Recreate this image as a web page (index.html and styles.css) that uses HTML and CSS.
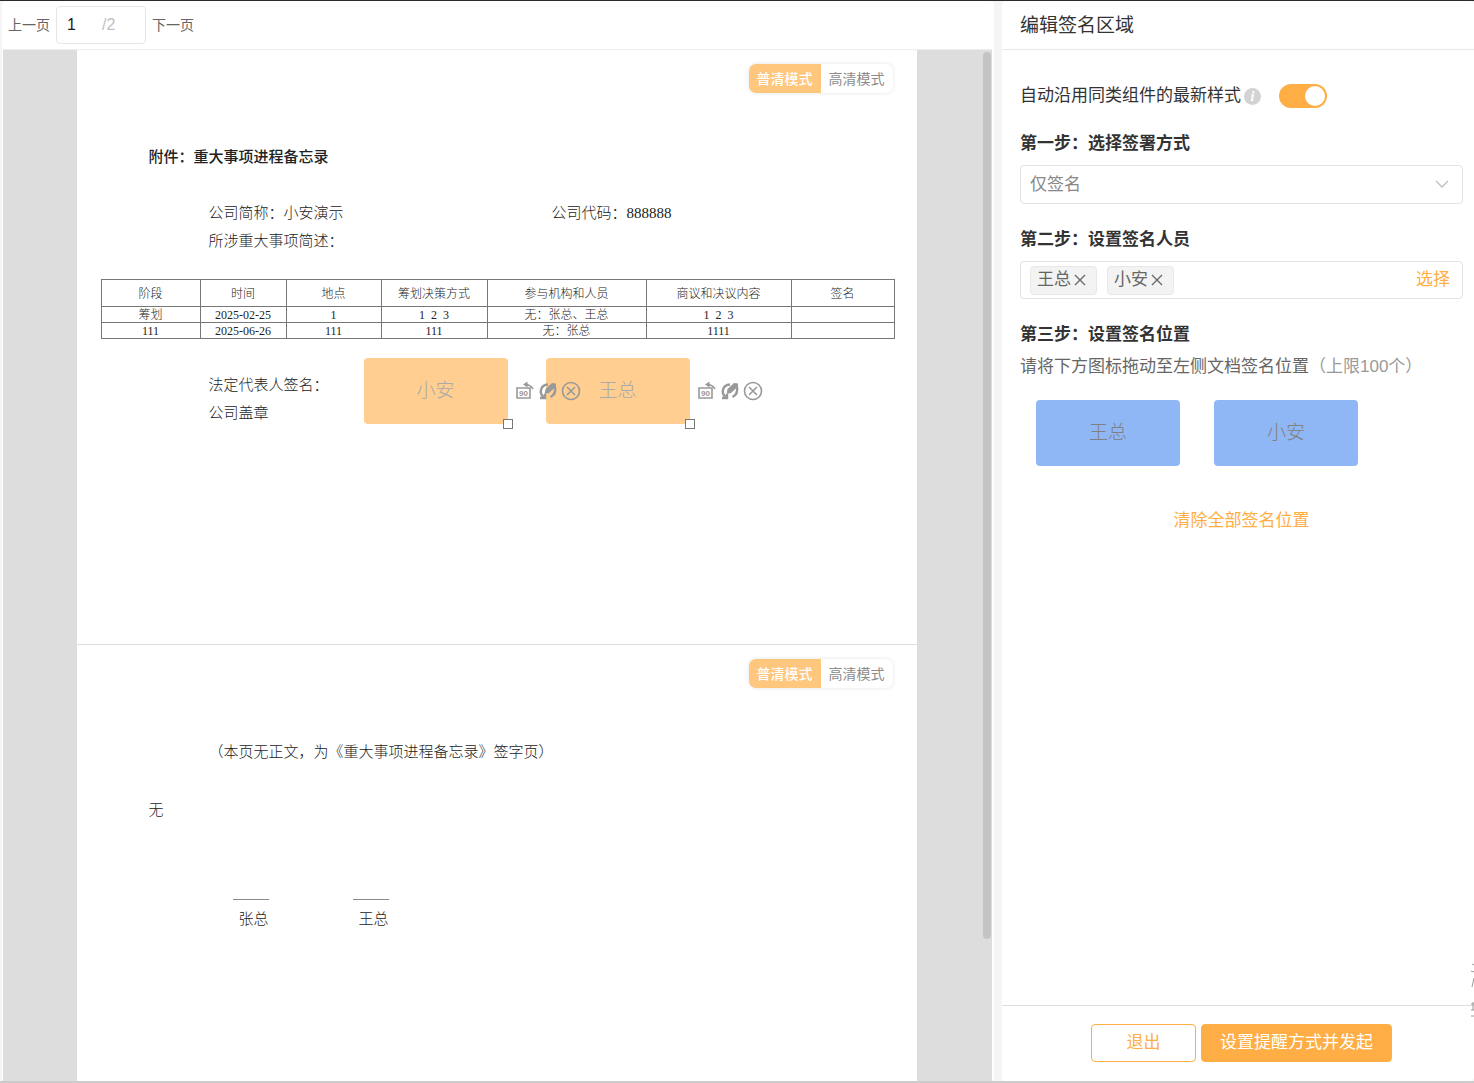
FILE: index.html
```html
<!DOCTYPE html>
<html lang="zh-CN">

<head>
	<meta charset="utf-8">
	<title>编辑签名区域</title>
	<link rel="stylesheet" href="styles.css">
</head>

<body>
	<!-- iconos de las firmas -->
	<svg class="defs" width="0" height="0">
		<symbol id="restyle" viewBox="0 0 20 20">
			<path d="M5.500 16C1 12 2 4 10 3.500M2 17h5v-4" fill="none" stroke="currentColor" stroke-width="2.400"/>
			<path d="M6.500 13l1-5L14 2l4 .5v3L11 12z" fill="currentColor"/>
			<path d="M17 6c1 5-.5 8-4.500 10" fill="none" stroke="currentColor" stroke-width="2.400"/>
		</symbol>
		<symbol id="remove" viewBox="0 0 20 20">
			<circle cx="10" cy="10" r="8.500" fill="none" stroke="currentColor" stroke-width="1.600"/>
			<path d="M6 6l8 8M14 6l-8 8" stroke="currentColor" stroke-width="1.600"/>
		</symbol>
		<symbol id="cross" viewBox="0 0 14 14">
			<path d="M2 2l10 10M12 2L2 12" stroke="currentColor" stroke-width="1.300"/>
		</symbol>
	</svg>

	<div class="app">
		<main class="left">
			<nav class="toolbar">
				<a href="#p1">上一页</a>
				<label class="pager"><input type="text" value="1" aria-label="页码"><span>/2</span></label>
				<a href="#p2">下一页</a>
			</nav>
			<div class="viewer">
				<div class="thumb"></div>
				<section class="page" id="p1">
					<div class="mode">
						<button type="button" class="on">普清模式</button>
						<button type="button">高清模式</button>
					</div>
					<h1>附件：重大事项进程备忘录</h1>
					<div class="row">
						<p>公司简称：小安演示</p>
						<p>公司代码：888888</p>
					</div>
					<p class="indent">所涉重大事项简述：</p>
					<table>
						<colgroup>
							<col class="c1"><col class="c2"><col class="c3"><col class="c4"><col class="c5"><col class="c6"><col class="c7">
						</colgroup>
						<thead>
							<tr>
								<th>阶段</th>
								<th>时间</th>
								<th>地点</th>
								<th>筹划决策方式</th>
								<th>参与机构和人员</th>
								<th>商议和决议内容</th>
								<th>签名</th>
							</tr>
						</thead>
						<tbody>
							<tr>
								<td>筹划</td>
								<td>2025-02-25</td>
								<td>1</td>
								<td>1&nbsp; 2&nbsp; 3</td>
								<td>无：张总、王总</td>
								<td>1&nbsp; 2&nbsp; 3</td>
								<td></td>
							</tr>
							<tr>
								<td>111</td>
								<td>2025-06-26</td>
								<td>111</td>
								<td>111</td>
								<td>无：张总</td>
								<td>1111</td>
								<td></td>
							</tr>
						</tbody>
					</table>
					<p class="indent">法定代表人签名：</p>
					<p class="indent">公司盖章</p>

					<div class="placed placed-b">
						<div class="sign">王总</div>
						<i class="handle"></i>
						<div class="tools">
							<button type="button" aria-label="旋转">
								<svg viewBox="0 0 20 20">
									<path d="M2 7h13v10H2zM10 3.500c4 0 6 1 8 4.500M12.500 1.500l-3 2 3 2" fill="none" stroke="currentColor" stroke-width="1.600"/>
									<text x="8.500" y="15" text-anchor="middle" class="deg">90</text>
								</svg>
							</button>
							<button type="button" aria-label="样式"><svg><use href="#restyle"/></svg></button>
							<button type="button" aria-label="删除"><svg><use href="#remove"/></svg></button>
						</div>
					</div>
					<div class="placed placed-a">
						<div class="sign">小安</div>
						<i class="handle"></i>
						<div class="tools">
							<button type="button" aria-label="旋转">
								<svg viewBox="0 0 20 20">
									<path d="M2 7h13v10H2zM10 3.500c4 0 6 1 8 4.500M12.500 1.500l-3 2 3 2" fill="none" stroke="currentColor" stroke-width="1.600"/>
									<text x="8.500" y="15" text-anchor="middle" class="deg">90</text>
								</svg>
							</button>
							<button type="button" aria-label="样式"><svg><use href="#restyle"/></svg></button>
							<button type="button" aria-label="删除"><svg><use href="#remove"/></svg></button>
						</div>
					</div>
				</section>

				<section class="page" id="p2">
					<div class="mode">
						<button type="button" class="on">普清模式</button>
						<button type="button">高清模式</button>
					</div>
					<p class="indent">（本页无正文，为《重大事项进程备忘录》签字页）</p>
					<p class="none">无</p>
					<div class="lines">
						<p>张总</p>
						<p>王总</p>
					</div>
				</section>
			</div>
		</main>

		<aside class="right">
			<h2>编辑签名区域</h2>
			<form class="steps">
				<div class="auto">
					<label for="auto">自动沿用同类组件的最新样式</label>
					<span class="info">i</span>
					<input type="checkbox" id="auto" class="switch" checked>
				</div>

				<label class="step" for="tipo">第一步：选择签署方式</label>
				<div class="select">
					<select id="tipo">
						<option>仅签名</option>
					</select>
					<svg viewBox="0 0 14 14"><path d="M1 3l6 6 6-6" fill="none" stroke="currentColor" stroke-width="1.300"/></svg>
				</div>

				<h3 class="step">第二步：设置签名人员</h3>
				<div class="people">
					<span class="tag">王总<button type="button" aria-label="删除王总"><svg><use href="#cross"/></svg></button></span>
					<span class="tag">小安<button type="button" aria-label="删除小安"><svg><use href="#cross"/></svg></button></span>
					<a href="#">选择</a>
				</div>

				<h3 class="step">第三步：设置签名位置</h3>
				<p class="hint">请将下方图标拖动至左侧文档签名位置<span>（上限100个）</span></p>
				<div class="drag">
					<div class="sign">王总</div>
					<div class="sign">小安</div>
				</div>
				<a href="#" class="clear">清除全部签名位置</a>
			</form>
			<footer>
				<button type="button" class="exit">退出</button>
				<button type="button" class="send">设置提醒方式并发起</button>
			</footer>
			<svg class="float" viewBox="0 0 3 58"><path d="M1 3l2 1M0 10l2 1 1-1M3 17l-2 9M0 43h3M0 49h3M0 55h3M2 41v8" fill="none" stroke="currentColor"/></svg>
		</aside>
	</div>
</body>

</html>
```
FILE: styles.css
```css
* {
	box-sizing: border-box;
}

body {
	margin: 0;
	background-color: #f5f5f5;
	color: #333;
	font-family: "Liberation Sans", "Noto Sans CJK SC", sans-serif;
	font-size: 17px;
	line-height: 24px;
	overflow: hidden;
}

h1, h2, h3, p {
	margin: 0;
}

a {
	color: #ffae45;
	text-decoration: none;
}

button {
	font: inherit;
	padding: 0;
	border: 0;
	background: none;
	cursor: pointer;
}

.defs {
	position: absolute;
}

.app {
	display: flex;
	gap: 8px;
	height: 100vh;
	padding-left: 2px;
	border-top: 1px solid #2b2a2f;
	border-bottom: 2px solid #ccc;
}

/* parte izquierda */
.left {
	flex: 1;
	min-width: 0;
	display: flex;
	flex-direction: column;
	background-color: #fff;
	padding: 0 2px 0 1px;
	border-radius: 4px;
}

.toolbar {
	display: flex;
	align-items: center;
	gap: 6px;
	height: 49px;
	padding-left: 5px;
	border-bottom: 1px solid #eee;
	font-size: 14px;
	flex: none;
}

.toolbar a {
	color: #666;
}

.pager {
	display: flex;
	align-items: center;
	width: 90px;
	height: 38px;
	padding-left: 10px;
	border: 1px solid #e6e6e6;
	border-radius: 4px;
	font-size: 16px;
	color: #c0c0c0;
}

.pager input {
	width: 35px;
	padding: 0;
	border: 0;
	outline: 0;
	font: inherit;
	color: #222;
}

.viewer {
	flex: 1;
	min-height: 0;
	padding-right: 2px;
	overflow: hidden;
	position: relative;
	background-color: #ddd;
}

.thumb {
	position: absolute;
	top: 2px;
	right: 1px;
	width: 8px;
	height: 86%;
	border-radius: 4px;
	background-color: #c4c4c4;
}

.page {
	position: relative;
	width: 840px;
	height: 595px;
	margin: 0 auto;
	padding: 93px 24px 0;
	background-color: #fff;
	border-bottom: 1px solid #ddd;
	color: #222;
	font-family: "Liberation Serif", "Noto Sans CJK SC", serif;
	font-size: 15px;
	font-weight: 300;
	line-height: 28px;
}

.page h1 {
	padding-left: 48px;
	margin-bottom: 28px;
	font-size: 15px;
	font-weight: 500;
	line-height: 28px;
}

.row {
	display: grid;
	grid-template-columns: 343px 1fr;
	padding-left: 108px;
}

.indent {
	padding-left: 108px;
}

table {
	width: 100%;
	table-layout: fixed;
	border-collapse: collapse;
	margin: 24px 0 32px;
	font-size: 12px;
	line-height: 14px;
	text-align: center;
}

th, td {
	height: 16px;
	padding: 1px 0 0;
	border: 1px solid #777;
	font-weight: 300;
}

th {
	height: 27px;
}

.c1 { width: 99px; }
.c2 { width: 86px; }
.c3 { width: 95px; }
.c4 { width: 106px; }
.c5 { width: 159px; }
.c6 { width: 145px; }
.c7 { width: 103px; }

.mode {
	position: absolute;
	top: 14px;
	right: 24px;
	display: flex;
	height: 29px;
	border-radius: 7px;
	overflow: hidden;
	box-shadow: 0 0 4px #e4e4e4;
	font-family: "Liberation Sans", "Noto Sans CJK SC", sans-serif;
	font-size: 14px;
	font-weight: 400;
}

.mode button {
	width: 72px;
	color: #8c8c8c;
}

.mode .on {
	background-color: #ffc67d;
	color: #fff;
	font-weight: 500;
}

.sign {
	display: flex;
	align-items: center;
	justify-content: center;
	width: 144px;
	height: 66px;
	border-radius: 4px;
	background-color: #90b7f5;
	color: #808080;
	font-family: "Liberation Sans", "Noto Sans CJK SC", sans-serif;
	font-size: 19px;
	font-weight: 300;
}

/* firmas colocadas encima del documento */
.placed {
	position: absolute;
	top: 308px;
	display: flex;
	align-items: center;
	gap: 7px;
}

.placed-a { left: 287px; }
.placed-b { left: 469px; }

.placed .sign {
	background-color: #ffce90;
	color: #aaa;
}

.handle {
	position: absolute;
	left: 139px;
	top: 61px;
	width: 10px;
	height: 10px;
	border: 1px solid #777;
	background-color: #fff;
}

.tools {
	display: flex;
	gap: 3px;
}

.tools button,
.tools svg {
	display: block;
	width: 20px;
	height: 20px;
	color: #999;
}

.deg {
	font: bold 8px "Liberation Sans", sans-serif;
	fill: currentColor;
}

.none {
	padding-left: 48px;
	margin-top: 30px;
}

.lines {
	display: flex;
	gap: 84px;
	padding-left: 132px;
	margin-top: 75px;
}

.lines p {
	width: 36px;
	padding: 5px 0 0 6px;
	border-top: 1px solid #888;
}

/* parte derecha */
.right {
	position: relative;
	width: 472px;
	flex: none;
	display: flex;
	flex-direction: column;
	background-color: #fff;
	border-radius: 4px;
}

.right h2 {
	height: 49px;
	padding-left: 18px;
	border-bottom: 1px solid #e8e8e8;
	font-size: 19px;
	font-weight: 400;
	line-height: 50px;
}

.steps {
	flex: 1;
	padding: 34px 11px 0 18px;
}

.auto {
	display: flex;
	align-items: center;
}

.info {
	width: 17px;
	height: 17px;
	margin: 0 18px 0 3px;
	border-radius: 50%;
	background-color: #d3d3d3;
	color: #fff;
	font: italic bold 14px/17px "Liberation Serif", serif;
	text-align: center;
}

.switch {
	appearance: none;
	width: 48px;
	height: 24px;
	margin: 0;
	padding: 2px;
	border-radius: 12px;
	background-color: #ffae45;
}

.switch::before {
	content: "";
	display: block;
	width: 20px;
	height: 20px;
	margin-left: 24px;
	border-radius: 50%;
	background-color: #fff;
}

.step {
	display: block;
	margin: 24px 0 9px;
	font-size: 17px;
	font-weight: 700;
	line-height: 24px;
}

.select {
	display: grid;
	align-items: center;
	color: #c0c0c0;
}

.select select,
.select svg {
	grid-area: 1 / 1;
}

.select select {
	appearance: none;
	width: 100%;
	height: 39px;
	padding: 0 9px;
	border: 1px solid #e2e2e2;
	border-radius: 4px;
	background-color: #fff;
	color: #888;
	font: inherit;
}

.select svg {
	justify-self: end;
	width: 14px;
	height: 14px;
	margin-right: 14px;
	pointer-events: none;
}

.people {
	display: flex;
	align-items: center;
	gap: 10px;
	height: 38px;
	padding: 0 12px 0 9px;
	border: 1px solid #e2e2e2;
	border-radius: 4px;
}

.people a {
	margin-left: auto;
}

.tag {
	display: flex;
	align-items: center;
	gap: 2px;
	height: 29px;
	padding: 0 9px 0 6px;
	border: 1px solid #e8e8e8;
	border-radius: 4px;
	background-color: #f3f3f3;
	color: #666;
}

.tag svg {
	display: block;
	width: 14px;
	height: 14px;
	color: #666;
}

.hint {
	margin-top: -1px;
	color: #666;
}

.hint span {
	color: #999;
}

.drag {
	display: flex;
	gap: 34px;
	margin: 21px 16px 43px;
}

.clear {
	display: block;
	text-align: center;
}

footer {
	display: flex;
	justify-content: center;
	gap: 5px;
	padding: 18px 0 19px 7px;
	border-top: 1px solid #ddd;
}

footer button {
	height: 38px;
	border: 1px solid #ffae45;
	border-radius: 4px;
	color: #ffae45;
}

.exit {
	width: 105px;
}

footer .send {
	width: 191px;
	background-color: #ffae45;
	color: #fff;
}

.float {
	position: absolute;
	right: 0;
	bottom: 62px;
	width: 3px;
	height: 58px;
	color: #999;
}
```
